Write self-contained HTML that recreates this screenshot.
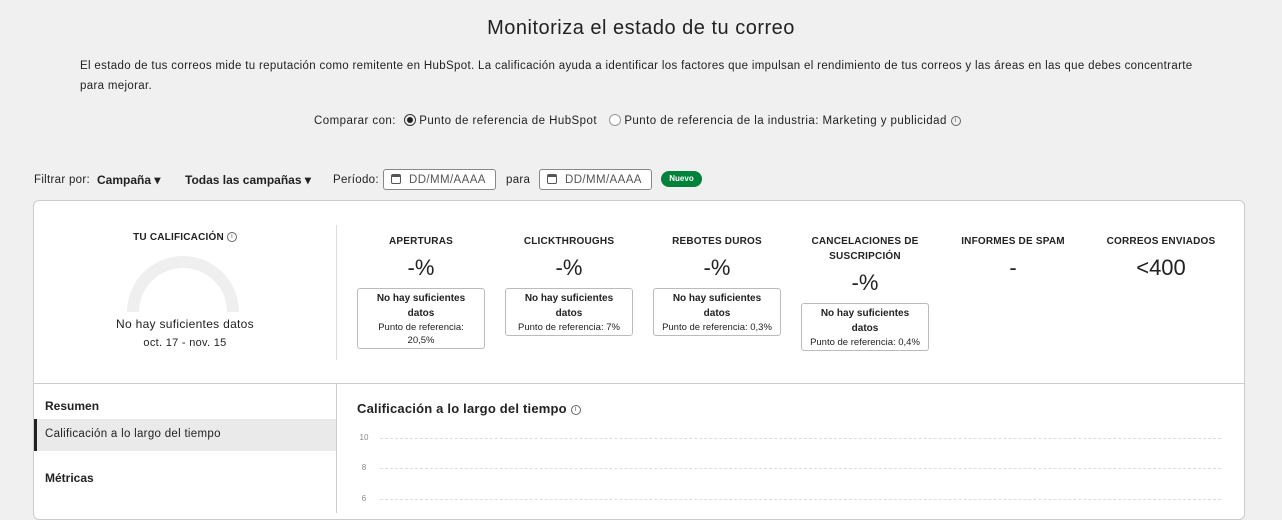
<!DOCTYPE html>
<html><head><meta charset="utf-8"><style>
*{margin:0;padding:0;box-sizing:border-box}
body{width:1282px;height:505px;overflow:hidden;background:#f0f0f0;font-family:"Liberation Sans",sans-serif;color:#33475b;position:relative}
.a{position:absolute}
.t{font-size:12px;color:#222;letter-spacing:.3px}
.h{font-size:10px;font-weight:bold;color:#222;text-align:center;letter-spacing:.2px;line-height:15px}
.col{position:absolute;width:148px;text-align:center}
.v{font-size:22px;color:#222;margin-top:6px;line-height:26px}
.box{margin:7px auto 0;width:128px;border:1px solid #bbb;border-radius:3px;background:#fff;padding:2px 2px 1px;font-size:9.5px;line-height:13px;color:#222}
.box b{font-size:10px;line-height:15px}
.inp{position:absolute;top:169px;height:21px;border:1px solid #888;border-radius:3px;background:#fff;font-size:11.5px;color:#555;padding:4px 0 0 25px;letter-spacing:.4px}
.cal{position:absolute;left:7px;top:4px;width:10px;height:10px;border:1.3px solid #555;border-radius:2px;border-top-width:3px}
.i{display:inline-block;width:10px;height:10px;border:1px solid #666;border-radius:50%;font-size:7px;line-height:8px;text-align:center;vertical-align:middle;font-weight:normal;color:#666;letter-spacing:0}
.gl{position:absolute;left:380px;width:841px;border-top:1px dashed #ddd}
.yl{position:absolute;left:358px;font-size:8px;color:#888;width:12px;text-align:center}
</style></head><body>
<div class="a" style="left:0;width:1282px;top:17px;text-align:center;font-size:20px;color:#222;letter-spacing:.5px">Monitoriza el estado de tu correo</div>
<div class="a t" style="left:80px;top:56px;width:1130px;line-height:20px;font-size:11.5px;letter-spacing:.33px">El estado de tus correos mide tu reputación como remitente en HubSpot. La calificación ayuda a identificar los factores que impulsan el rendimiento de tus correos y las áreas en las que debes concentrarte<br>para mejorar.</div>
<div class="a t" style="left:314px;top:114px;font-size:11.5px;white-space:nowrap;letter-spacing:.45px">Comparar con:
<span style="display:inline-block;width:12px;height:12px;border:1px solid #333;border-radius:50%;vertical-align:-2px;margin-left:4px;position:relative"><span style="position:absolute;left:2px;top:2px;width:6px;height:6px;border-radius:50%;background:#222"></span></span> Punto de referencia de HubSpot
<span style="display:inline-block;width:12px;height:12px;border:1px solid #999;border-radius:50%;vertical-align:-2px;margin-left:8px;background:#fff"></span> Punto de referencia de la industria: Marketing y publicidad <span class="i">i</span></div>
<div class="a t" style="left:34px;top:174px;font-size:11.5px">Filtrar por:</div>
<div class="a t" style="left:97px;top:173px;font-weight:bold;letter-spacing:0">Campaña ▾</div>
<div class="a t" style="left:185px;top:173px;font-weight:bold;letter-spacing:0">Todas las campañas ▾</div>
<div class="a t" style="left:333px;top:174px;font-size:11.5px">Período:</div>
<div class="inp" style="left:383px;width:113px"><span class="cal"></span>DD/MM/AAAA</div>
<div class="a t" style="left:506px;top:174px;font-size:11.5px">para</div>
<div class="inp" style="left:539px;width:113px"><span class="cal"></span>DD/MM/AAAA</div>
<div class="a" style="left:661px;top:171px;width:41px;height:16px;border-radius:8px;background:#00823a;color:#fff;font-size:8px;font-weight:bold;text-align:center;line-height:16px">Nuevo</div>
<div class="a" style="left:33px;top:200px;width:1212px;height:320px;background:#fff;border:1px solid #ccc;border-radius:6px"></div>
<div class="a" style="left:336px;top:225px;height:135px;border-left:1px solid #ddd"></div>
<div class="a" style="left:34px;top:383px;width:1210px;border-top:1px solid #ccc"></div>
<div class="a" style="left:336px;top:383px;height:130px;border-left:1px solid #ccc"></div>
<div class="a h" style="left:34px;width:302px;top:230px">TU CALIFICACIÓN <span class="i">i</span></div>
<div class="a" style="left:127px;top:256px;width:112px;height:56px;border:12px solid #efefef;border-bottom:none;border-radius:56px 56px 0 0"></div>
<div class="a t" style="left:34px;width:302px;top:317px;text-align:center">No hay suficientes datos</div>
<div class="a t" style="left:34px;width:302px;top:337px;text-align:center;font-size:11px">oct. 17 - nov. 15</div>
<div class="col" style="left:347px;top:234px"><div class="h">APERTURAS</div><div class="v">-%</div><div class="box"><b>No hay suficientes<br>datos</b><br>Punto de referencia:<br>20,5%</div></div>
<div class="col" style="left:495px;top:234px"><div class="h">CLICKTHROUGHS</div><div class="v">-%</div><div class="box"><b>No hay suficientes<br>datos</b><br>Punto de referencia: 7%</div></div>
<div class="col" style="left:643px;top:234px"><div class="h">REBOTES DUROS</div><div class="v">-%</div><div class="box"><b>No hay suficientes<br>datos</b><br>Punto de referencia: 0,3%</div></div>
<div class="col" style="left:791px;top:234px"><div class="h">CANCELACIONES DE<br>SUSCRIPCIÓN</div><div class="v">-%</div><div class="box"><b>No hay suficientes<br>datos</b><br>Punto de referencia: 0,4%</div></div>
<div class="col" style="left:939px;top:234px"><div class="h">INFORMES DE SPAM</div><div class="v">-</div></div>
<div class="col" style="left:1087px;top:234px"><div class="h">CORREOS ENVIADOS</div><div class="v">&lt;400</div></div>
<div class="a t" style="left:45px;top:399px;font-weight:bold;letter-spacing:0">Resumen</div>
<div class="a" style="left:34px;top:419px;width:302px;height:32px;background:#eaeaea;border-left:3px solid #222"></div>
<div class="a t" style="left:45px;top:428px;font-size:11.5px">Calificación a lo largo del tiempo</div>
<div class="a t" style="left:45px;top:471px;font-weight:bold;letter-spacing:0">Métricas</div>
<div class="a" style="left:357px;top:401px;font-size:13px;font-weight:bold;color:#222;letter-spacing:.2px">Calificación a lo largo del tiempo <span class="i">i</span></div>
<div class="yl" style="top:433px">10</div><div class="gl" style="top:438px"></div>
<div class="yl" style="top:463px">8</div><div class="gl" style="top:468px"></div>
<div class="yl" style="top:494px">6</div><div class="gl" style="top:499px"></div>
</body></html>
